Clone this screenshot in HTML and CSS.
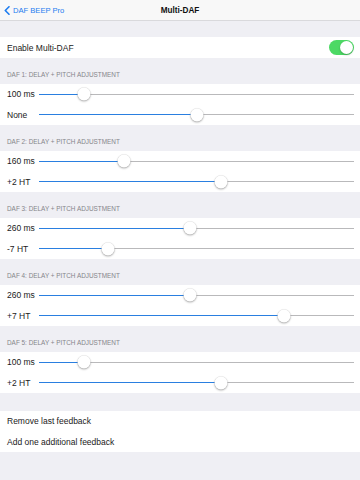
FILE: index.html
```html
<!DOCTYPE html>
<html lang="en">
<head>
  <meta charset="UTF-8" />
  <meta name="viewport" content="width=device-width, initial-scale=1.0" />
  <title>Multi-DAF</title>
  <link rel="stylesheet" href="styles.css">
</head>
<body>
  <header class="navbar">
    <a class="back" href="#">
      <svg class="chevron" width="6" height="9" viewBox="0 0 6 9"><polyline points="5,0.8 1.3,4.5 5,8.2" fill="none" stroke="#1c7cf0" stroke-width="1.6" stroke-linecap="round" stroke-linejoin="round"/></svg>
      <span>DAF BEEP Pro</span>
    </a>
    <div class="title">Multi-DAF</div>
  </header>

  <section class="group first">
    <div class="row">
      <span>Enable Multi-DAF</span>
      <div class="toggle"><div class="knob"></div></div>
    </div>
  </section>

  <div class="section-header">DAF 1: DELAY + PITCH ADJUSTMENT</div>
  <section class="group">
    <div class="row"><span class="label">100 ms</span><div class="track"><div class="fill" style="width: 14.3%"></div><div class="thumb" style="left: 14.3%"></div></div></div>
    <div class="row"><span class="label">None</span><div class="track"><div class="fill" style="width: 50.2%"></div><div class="thumb" style="left: 50.2%"></div></div></div>
  </section>

  <div class="section-header">DAF 2: DELAY + PITCH ADJUSTMENT</div>
  <section class="group">
    <div class="row"><span class="label">160 ms</span><div class="track"><div class="fill" style="width: 27%"></div><div class="thumb" style="left: 27%"></div></div></div>
    <div class="row"><span class="label">+2 HT</span><div class="track"><div class="fill" style="width: 57.8%"></div><div class="thumb" style="left: 57.8%"></div></div></div>
  </section>

  <div class="section-header">DAF 3: DELAY + PITCH ADJUSTMENT</div>
  <section class="group">
    <div class="row"><span class="label">260 ms</span><div class="track"><div class="fill" style="width: 48%"></div><div class="thumb" style="left: 48%"></div></div></div>
    <div class="row"><span class="label">-7 HT</span><div class="track"><div class="fill" style="width: 21.9%"></div><div class="thumb" style="left: 21.9%"></div></div></div>
  </section>

  <div class="section-header">DAF 4: DELAY + PITCH ADJUSTMENT</div>
  <section class="group">
    <div class="row"><span class="label">260 ms</span><div class="track"><div class="fill" style="width: 48%"></div><div class="thumb" style="left: 48%"></div></div></div>
    <div class="row"><span class="label">+7 HT</span><div class="track"><div class="fill" style="width: 77.8%"></div><div class="thumb" style="left: 77.8%"></div></div></div>
  </section>

  <div class="section-header">DAF 5: DELAY + PITCH ADJUSTMENT</div>
  <section class="group">
    <div class="row"><span class="label">100 ms</span><div class="track"><div class="fill" style="width: 14.3%"></div><div class="thumb" style="left: 14.3%"></div></div></div>
    <div class="row"><span class="label">+2 HT</span><div class="track"><div class="fill" style="width: 57.8%"></div><div class="thumb" style="left: 57.8%"></div></div></div>
  </section>

  <section class="group actions">
    <div class="row">Remove last feedback</div>
    <div class="row">Add one additional feedback</div>
  </section>
</body>
</html>
```

FILE: styles.css
```css
body {
  margin: 0;
  font-family: "Liberation Sans", Arial, sans-serif;
  background-color: #efeff4;
  color: #1a1a1a;
  height: 480px;
  overflow: hidden;
}

.navbar {
  height: 21px;
  background-color: #f8f8f8;
  border-bottom: 1px solid #d9d9dc;
  display: flex;
  align-items: center;
  justify-content: center;
  position: relative;
  box-sizing: border-box;
}

.back {
  position: absolute;
  left: 4px;
  top: 0;
  height: 20px;
  display: flex;
  align-items: center;
  gap: 3px;
  color: #1c7cf0;
  text-decoration: none;
  font-size: 7.6px;
}

.title {
  font-size: 8.2px;
  font-weight: 700;
  color: #111;
}

.group {
  background-color: white;
}

.group.first {
  margin-top: 16px;
}

.group.actions {
  margin-top: 18px;
}

.row {
  height: 20.5px;
  display: flex;
  align-items: center;
  padding: 0 6px 0 7px;
  font-size: 8.5px;
}

.group.first .row {
  height: 21px;
  justify-content: space-between;
  padding-right: 6px;
}

.toggle {
  width: 25px;
  height: 15px;
  border-radius: 8px;
  background-color: #4cd964;
  position: relative;
}

.toggle .knob {
  position: absolute;
  right: 1px;
  top: 1px;
  width: 13px;
  height: 13px;
  border-radius: 50%;
  background-color: white;
  box-shadow: 0 1px 2px rgba(0, 0, 0, 0.25);
}

.section-header {
  height: 26px;
  box-sizing: border-box;
  display: flex;
  align-items: flex-end;
  padding: 0 7px 5px;
  font-size: 6.4px;
  line-height: 8px;
  color: #85858a;
}

.label {
  width: 32px;
  flex-shrink: 0;
}

.track {
  flex: 1;
  height: 1px;
  background-color: #b9b9bb;
  position: relative;
}

.track .fill {
  height: 1px;
  background-color: #2a7fe0;
}

.track .thumb {
  position: absolute;
  top: 0.5px;
  width: 13px;
  height: 13px;
  border-radius: 50%;
  background-color: white;
  transform: translate(-50%, -50%);
  box-shadow: 0 1px 2px rgba(0, 0, 0, 0.3), 0 0 0 0.5px rgba(0, 0, 0, 0.08);
}
```
